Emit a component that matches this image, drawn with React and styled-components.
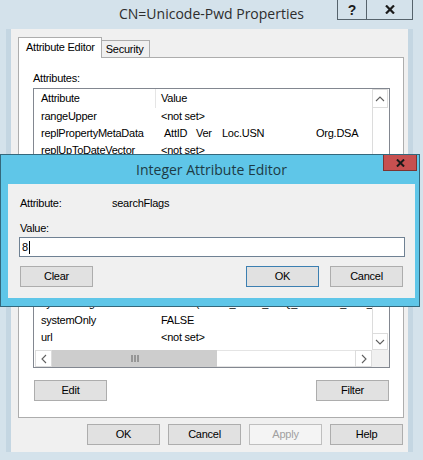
import React from 'react';
import styled, { createGlobalStyle } from 'styled-components';

const UI_FONT = `"Liberation Sans", Arial, sans-serif`;
const TITLE_FONT = `"Open Sans", "Noto Sans", sans-serif`;

const GlobalStyle = createGlobalStyle`
  html, body {
    margin: 0;
    padding: 0;
    background: #d4e2eb;
  }
  body {
    font-family: ${UI_FONT};
    font-size: 11px;
  }
`;

const Window = styled.div`
  position: relative;
  width: 423px;
  height: 460px;
  overflow: hidden;
  background: #d4e2eb;
  display: flex;
  flex-direction: column;
  font-family: ${UI_FONT};
  font-size: 11px;
  letter-spacing: -0.25px;
  color: #000;
`;

const TitleBar = styled.div`
  flex: none;
  height: 29px;
  display: grid;
  grid-template-columns: 1fr auto 1fr;
  align-items: start;
`;

const Title = styled.div`
  grid-column: 2;
  font-family: ${TITLE_FONT};
  font-size: 14px;
  letter-spacing: 0;
  line-height: 28px;
  color: #2d2d2d;
  white-space: nowrap;
`;

const CaptionButtons = styled.div`
  grid-column: 3;
  justify-self: end;
  display: flex;
  margin-right: 10px;
`;

const CaptionButton = styled.div`
  width: ${(p) => p.$w}px;
  height: 20px;
  box-sizing: border-box;
  border: 1px solid #56636c;
  border-top: none;
  & + & {
    border-left: none;
  }
  display: flex;
  align-items: center;
  justify-content: center;
  font: bold 14px ${UI_FONT};
  color: #1b1b1b;
`;

const Panel = styled.div`
  flex: none;
  height: 423px;
  margin: 0 15px 0 11px;
  box-sizing: border-box;
  padding: 8px 4px 0 7px;
  background: #f0f0f0;
  box-shadow: -5px 0 0 #c4d6e2, 5px 0 0 #c4d6e2;
  display: flex;
  flex-direction: column;
`;

const TabStrip = styled.div`
  display: flex;
  align-items: flex-end;
  height: 21px;
  margin-bottom: -1px;
  position: relative;
  z-index: 1;
`;

const Tab = styled.div`
  box-sizing: border-box;
  border: 1px solid #adadad;
  border-bottom: none;
  white-space: nowrap;
  ${(p) =>
    p.$active
      ? `
    height: 21px;
    padding: 0 6px 0 7px;
    line-height: 18px;
    background: #fff;
  `
      : `
    height: 17px;
    margin-bottom: 1px;
    padding: 0 5px 0 4px;
    line-height: 16px;
    border-left: none;
    background: #f0f0f0;
  `}
`;

const TabPanel = styled.div`
  flex: none;
  height: 361px;
  box-sizing: border-box;
  border: 1px solid #adadad;
  background: #fff;
  padding: 14px 0 0 14px;
`;

const Label = styled.div`
  line-height: 13px;
  white-space: nowrap;
`;

const ListBox = styled.div`
  margin-top: 3px;
  width: 357px;
  height: 280px;
  box-sizing: border-box;
  border: 1px solid #828790;
  background: #fff;
  display: grid;
  grid-template-columns: 1fr 17px;
  grid-template-rows: 1fr 17px;
`;

const ListContent = styled.div`
  overflow: hidden;
`;

const ListHeader = styled.div`
  display: grid;
  grid-template-columns: 122px 1fr;
  height: 19px;
  line-height: 19px;
`;

const HeaderCell = styled.div`
  padding-left: ${(p) => p.$pad}px;
  ${(p) => (p.$divider ? 'border-right: 1px solid #e5e5e5;' : '')}
`;

const ListRow = styled.div`
  display: grid;
  grid-template-columns: 122px 1fr;
  height: 17px;
  line-height: 17px;
  white-space: nowrap;
`;

const Cell = styled.div`
  padding-left: ${(p) => p.$pad}px;
  overflow: hidden;
`;

const MetaCols = styled.div`
  display: flex;
  margin-left: 3px;
`;

const MetaCol = styled.span`
  flex: none;
  width: ${(p) => (p.$w ? `${p.$w}px` : 'auto')};
`;

const VScroll = styled.div`
  display: flex;
  flex-direction: column;
  align-items: flex-start;
`;

const ArrowBox = styled.div`
  flex: none;
  box-sizing: border-box;
  width: ${(p) => p.$w}px;
  height: ${(p) => p.$h}px;
  border: 1px solid #dcdcdc;
  display: flex;
  align-items: center;
  justify-content: center;
  background: #fff;
`;

const VTrack = styled.div`
  flex: 1;
  align-self: stretch;
  border-left: 1px solid #dcdcdc;
`;

const HScroll = styled.div`
  display: flex;
  padding-left: 1px;
`;

const Thumb = styled.div`
  flex: none;
  width: ${(p) => p.$w}px;
  background: #cdcdcd;
  display: flex;
  align-items: center;
  justify-content: center;
`;

const HTrack = styled.div`
  flex: 1;
  border-top: 1px solid #e4e4e4;
  border-bottom: 1px solid #e4e4e4;
`;

const Corner = styled.div`
  background: #f0f0f0;
`;

const ButtonRow = styled.div`
  display: flex;
  justify-content: ${(p) => p.$justify || 'space-between'};
  gap: ${(p) => p.$gap || 0}px;
  margin: ${(p) => p.$margin};
`;

const Button = styled.div`
  flex: none;
  width: 73px;
  height: 21px;
  box-sizing: border-box;
  border: 1px solid ${(p) => (p.$default ? '#3c7fb1' : p.$disabled ? '#bfbfbf' : '#adadad')};
  background: ${(p) => (p.$disabled ? '#f4f4f4' : '#e1e1e1')};
  color: ${(p) => (p.$disabled ? '#a0a0a0' : '#000')};
  line-height: 19px;
  text-align: center;
`;

const Spacer = styled.div`
  flex: 1;
`;

const Dialog = styled.div`
  position: absolute;
  left: 0;
  top: 154px;
  z-index: 2;
  width: 420px;
  height: 153px;
  box-sizing: border-box;
  border: 1px solid #34687c;
  background: #5fc6e8;
  padding: 0 4px 8px 7px;
  display: flex;
  flex-direction: column;
`;

const DialogTitleBar = styled.div`
  flex: none;
  height: 29px;
  display: grid;
  grid-template-columns: 1fr auto 1fr;
  align-items: start;
`;

const DialogTitle = styled(Title)`
  line-height: 29px;
  color: #1d3b45;
`;

const CloseButton = styled.div`
  grid-column: 3;
  justify-self: end;
  margin-right: -2px;
  width: 34px;
  height: 16px;
  box-sizing: border-box;
  border: 1px solid #7d3431;
  border-top: none;
  background: #c75050;
  display: flex;
  align-items: center;
  justify-content: center;
`;

const DialogBody = styled.div`
  flex: 1;
  background: #f0f0f0;
  padding: 13px 12px 0 12px;
  display: flex;
  flex-direction: column;
`;

const FieldRow = styled.div`
  display: grid;
  grid-template-columns: 92px 1fr;
  line-height: 13px;
`;

const TextInput = styled.div`
  margin: 2px 0 0 -1px;
  width: 386px;
  height: 20px;
  box-sizing: border-box;
  border: 1px solid #6f8193;
  background: #fff;
  padding-left: 2px;
  line-height: 18px;
  display: flex;
  align-items: center;
`;

const Caret = styled.span`
  display: inline-block;
  width: 1px;
  height: 13px;
  margin-left: 1px;
  background: #000;
`;

const Grip = () => (
  <svg width="8" height="7" viewBox="0 0 8 7">
    <path d="M1 0v7M4 0v7M7 0v7" stroke="#606060" strokeWidth="1" />
  </svg>
);

const Chevron = ({ dir }) => {
  const paths = {
    up: 'M1 5l4-4 4 4',
    down: 'M1 1l4 4 4-4',
    left: 'M5 1L1 5l4 4',
    right: 'M1 1l4 4-4 4',
  };
  const vertical = dir === 'up' || dir === 'down';
  return (
    <svg
      width={vertical ? 10 : 6}
      height={vertical ? 6 : 10}
      viewBox={vertical ? '0 0 10 6' : '0 0 6 10'}
    >
      <path d={paths[dir]} fill="none" stroke="#606060" strokeWidth="1.1" />
    </svg>
  );
};

const CrossIcon = ({ size, width, color }) => (
  <svg width={size} height={size - 1} viewBox="0 0 10 9">
    <path d="M1 0.5l8 8M9 0.5l-8 8" stroke={color} strokeWidth={width} />
  </svg>
);

const META = [
  ['AttID', 32],
  ['Ver', 26],
  ['Loc.USN', 94],
  ['Org.DSA', 0],
];

const ROWS = [
  ['rangeUpper', '<not set>'],
  ['replPropertyMetaData', 'meta'],
  ['replUpToDateVector', '<not set>'],
  ['repsFrom', '<not set>'],
  ['repsTo', '<not set>'],
  ['revision', '<not set>'],
  ['schemaFlagsEx', '<not set>'],
  ['schemaIDGUID', 'bf9679e1-0de6-11d0-a285-00aa003049e2'],
  ['searchFlags', '0x8 = ( PRESERVE_ON_DELETE )'],
  ['securityIdentifier', '<not set>'],
  ['showInAdvancedViewOnly', 'TRUE'],
  ['systemFlags', '0x12 = ( FLAG_ATTR_REQ_PARTIAL_SET_MEMBER )'],
  ['systemOnly', 'FALSE'],
  ['url', '<not set>'],
];

const App = () => (
  <Window>
    <GlobalStyle />
    <TitleBar>
      <Title>CN=Unicode-Pwd Properties</Title>
      <CaptionButtons>
        <CaptionButton $w={30}>?</CaptionButton>
        <CaptionButton $w={46}>
          <CrossIcon size={10} width={2.2} color="#1b1b1b" />
        </CaptionButton>
      </CaptionButtons>
    </TitleBar>

    <Panel>
      <TabStrip>
        <Tab $active>Attribute Editor</Tab>
        <Tab>Security</Tab>
      </TabStrip>

      <TabPanel>
        <Label>Attributes:</Label>
        <ListBox>
          <ListContent>
            <ListHeader>
              <HeaderCell $pad={7} $divider>
                Attribute
              </HeaderCell>
              <HeaderCell $pad={5}>Value</HeaderCell>
            </ListHeader>
            {ROWS.map(([name, value]) => (
              <ListRow key={name}>
                <Cell $pad={7}>{name}</Cell>
                <Cell $pad={5}>
                  {value === 'meta' ? (
                    <MetaCols>
                      {META.map(([text, w]) => (
                        <MetaCol key={text} $w={w}>
                          {text}
                        </MetaCol>
                      ))}
                    </MetaCols>
                  ) : (
                    value
                  )}
                </Cell>
              </ListRow>
            ))}
          </ListContent>

          <VScroll>
            <ArrowBox $w={16} $h={19}>
              <Chevron dir="up" />
            </ArrowBox>
            <VTrack />
            <ArrowBox $w={16} $h={17}>
              <Chevron dir="down" />
            </ArrowBox>
          </VScroll>

          <HScroll>
            <ArrowBox $w={17} $h={17}>
              <Chevron dir="left" />
            </ArrowBox>
            <Thumb $w={165}>
              <Grip />
            </Thumb>
            <HTrack />
            <ArrowBox $w={17} $h={17}>
              <Chevron dir="right" />
            </ArrowBox>
          </HScroll>
          <Corner />
        </ListBox>

        <ButtonRow $margin="12px 0 0 1px" style={{ width: 355 }}>
          <Button>Edit</Button>
          <Button>Filter</Button>
        </ButtonRow>
      </TabPanel>

      <ButtonRow $justify="flex-end" $gap={8} $margin="6px 1px 0 0">
        <Button>OK</Button>
        <Button>Cancel</Button>
        <Button $disabled>Apply</Button>
        <Button>Help</Button>
      </ButtonRow>
    </Panel>

    <Dialog>
      <DialogTitleBar>
        <DialogTitle>Integer Attribute Editor</DialogTitle>
        <CloseButton>
          <CrossIcon size={9} width={2.2} color="#1a1a1a" />
        </CloseButton>
      </DialogTitleBar>
      <DialogBody>
        <FieldRow>
          <span>Attribute:</span>
          <span>searchFlags</span>
        </FieldRow>
        <Label style={{ marginTop: 12 }}>Value:</Label>
        <TextInput>
          8
          <Caret />
        </TextInput>
        <ButtonRow $margin="9px 0 0 0" $gap={11}>
          <Button>Clear</Button>
          <Spacer />
          <Button $default>OK</Button>
          <Button>Cancel</Button>
        </ButtonRow>
      </DialogBody>
    </Dialog>
  </Window>
);

export default App;
